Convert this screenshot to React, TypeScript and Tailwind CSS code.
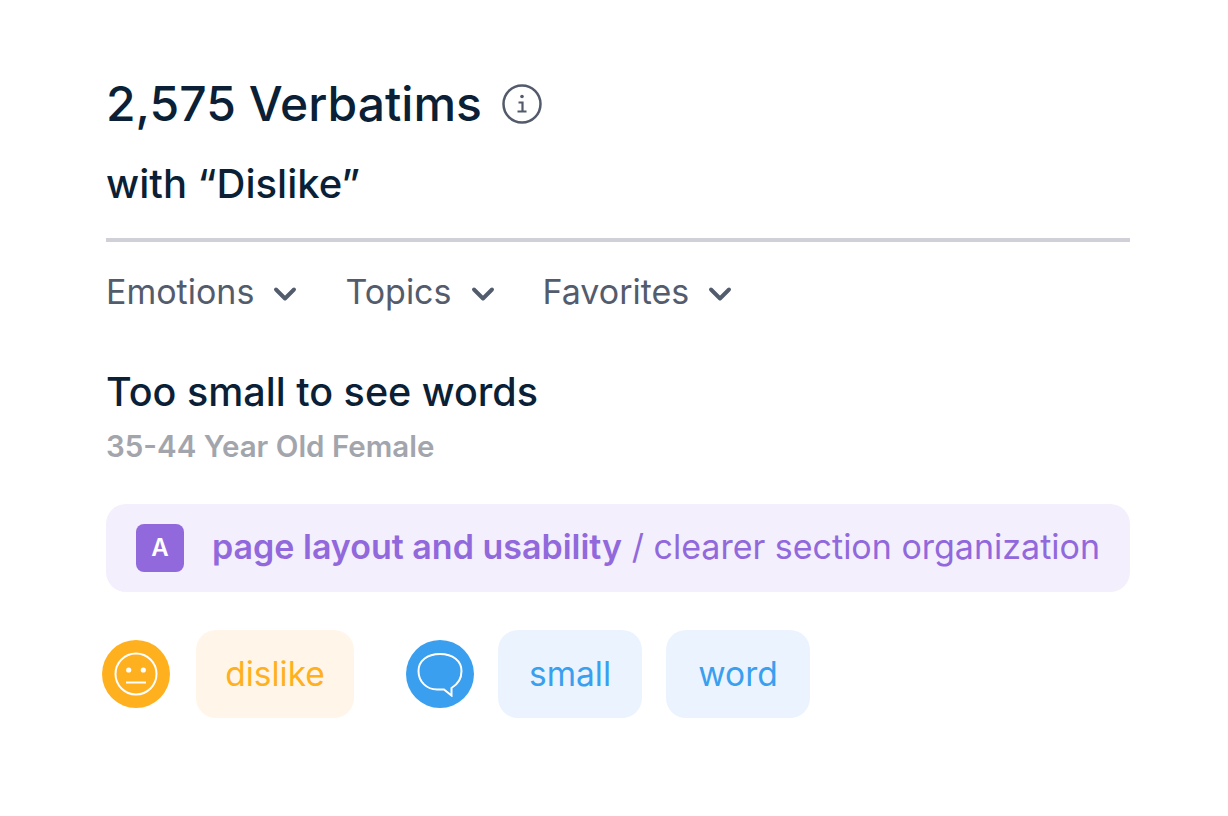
import { ChevronDown } from "lucide-react";

const FILTERS = ["Emotions", "Topics", "Favorites"];

function InfoCircle() {
  return (
    <svg width="40" height="40" viewBox="0 0 40 40" fill="none" stroke="#525a6b" strokeWidth="2.5">
      <circle cx="20" cy="20" r="18.5" />
      <circle cx="20" cy="12.5" r="1.8" fill="#525a6b" stroke="none" />
      <path d="M16.5 18.5H20.5V27M15.5 27.5H24.5" strokeWidth="2.2" />
    </svg>
  );
}

function Neutral() {
  return (
    <svg width="44" height="44" viewBox="0 0 44 44" fill="none" stroke="white" strokeWidth="2">
      <circle cx="22" cy="22" r="20.5" />
      <circle cx="14.7" cy="18" r="2.6" fill="white" stroke="none" />
      <circle cx="29.3" cy="18" r="2.6" fill="white" stroke="none" />
      <path d="M12 30.5H32" />
    </svg>
  );
}

function Bubble() {
  return (
    <svg width="46" height="46" viewBox="0 0 46 46" fill="none" stroke="white" strokeWidth="2">
      <path d="M23 3C10 3 1.5 10 1.5 20C1.5 31 10 38.5 20 38.5H27L34.5 44.5V37C40.5 33.5 44.5 27.5 44.5 20C44.5 10 36 3 23 3Z" />
    </svg>
  );
}

export default function App() {
  return (
    <main
      className="h-[816px] w-[1228px] bg-white pl-[106px] pr-[98px] pt-[74px]"
      style={{ fontFamily: "Inter, sans-serif" }}
    >
      <div className="flex h-[60px] items-center gap-5">
        <h1 className="text-[48px] font-medium leading-[60px] text-[#0b1f36]">2,575 Verbatims</h1>
        <InfoCircle />
      </div>
      <h2 className="mt-[30px] h-[40px] text-[40px] font-medium leading-[40px] text-[#0b1f36]">with “Dislike”</h2>
      <div className="mt-[34px] h-1 w-full bg-[#d0d1d8]" />

      <div className="mt-[28px] flex h-[44px] items-center gap-[42px]">
        {FILTERS.map((f) => (
          <button key={f} className="flex items-center gap-[13px] text-[34px] leading-[44px] text-[#535c6c]">
            {f}
            <ChevronDown className="mt-1 size-[36px]" strokeWidth={2.6} />
          </button>
        ))}
      </div>

      <h3 className="mt-[56px] text-[39.5px] font-medium leading-[44px] text-[#0b1f36]">Too small to see words</h3>
      <p className="mt-[14px] text-[29.5px] font-semibold leading-[36px] text-[#a3a5ad]">35-44 Year Old Female</p>

      <div className="mt-[40px] flex h-[88px] items-center gap-7 rounded-[20px] bg-[#f4effd] pl-[30px]">
        <span className="flex size-12 items-center justify-center rounded-lg bg-[#9169dc] text-[24px] font-semibold text-white">
          A
        </span>
        <p className="whitespace-nowrap pb-1 text-[34px] text-[#9169dc]">
          <span className="font-semibold">page layout and usability</span> / clearer section organization
        </p>
      </div>

      <div className="-ml-1 mt-[38px] flex items-center">
        <span className="flex size-[68px] items-center justify-center rounded-full bg-[#ffb01f]">
          <Neutral />
        </span>
        <span className="ml-[26px] flex h-[88px] w-[158px] items-center justify-center rounded-[20px] bg-[#fff6e9] text-[33.5px] text-[#ffb01f]">
          dislike
        </span>
        <span className="ml-[52px] flex size-[68px] items-center justify-center rounded-full bg-[#3a9fef]">
          <Bubble />
        </span>
        <span className="ml-[24px] flex h-[88px] w-[144px] items-center justify-center rounded-[20px] bg-[#ebf4fe] text-[33.5px] text-[#3a9fef]">
          small
        </span>
        <span className="ml-[24px] flex h-[88px] w-[144px] items-center justify-center rounded-[20px] bg-[#ebf4fe] text-[33.5px] text-[#3a9fef]">
          word
        </span>
      </div>
    </main>
  );
}
